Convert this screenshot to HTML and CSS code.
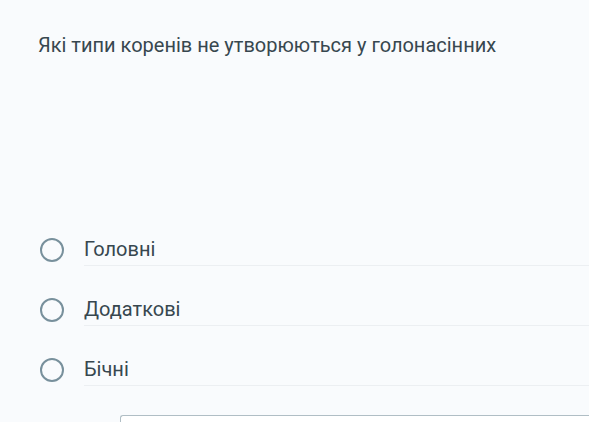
FILE: index.html
```html
<!DOCTYPE html>
<html lang="uk">
<head>
<meta charset="utf-8">
<link rel="stylesheet" href="styles.css">
</head>
<body>
<div class="question">
  <div class="title">Які типи коренів не утворюються у голонасінних</div>
  <div class="options">
    <label class="option"><span class="radio"></span><span class="label">Головні</span></label>
    <label class="option"><span class="radio"></span><span class="label">Додаткові</span></label>
    <label class="option"><span class="radio"></span><span class="label">Бічні</span></label>
  </div>
  <div class="answer-box"></div>
</div>
</body>
</html>
```
FILE: styles.css
```css
html, body {
  margin: 0;
  padding: 0;
  background: #f9fbfd;
  overflow: hidden;
}
body {
  font-family: Roboto, "Noto Sans", sans-serif;
  color: #37474f;
  width: 589px;
  height: 422px;
}
.question {
  padding: 33px 0 0 38px;
}
.title {
  font-size: 20px;
  line-height: 24px;
}
.options {
  margin-top: 180px;
  display: flex;
  flex-direction: column;
  gap: 31px;
}
.option {
  display: flex;
  align-items: flex-start;
}
.radio {
  box-sizing: border-box;
  width: 24px;
  height: 24px;
  border: 2.5px solid #78909c;
  border-radius: 50%;
  flex: none;
  margin: 1px 0 0 2px;
}
.label {
  flex: 1;
  margin-left: 20px;
  font-size: 20px;
  line-height: 24px;
  padding-bottom: 4px;
  border-bottom: 1px solid #eceff2;
}
.answer-box {
  margin: 29px 0 0 82px;
  height: 20px;
  border: 1px solid #b0bec5;
  border-right: none;
  border-radius: 3px 0 0 0;
  background: #fff;
}
```
